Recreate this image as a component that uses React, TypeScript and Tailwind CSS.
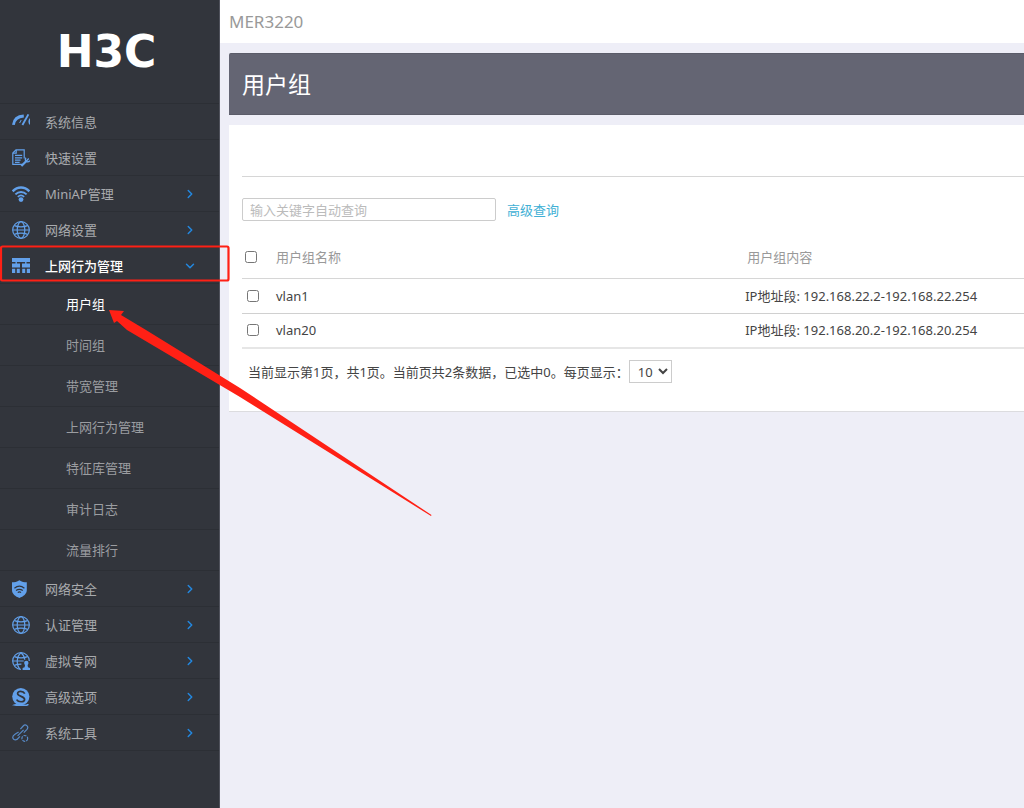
import { ChevronDown, ChevronRight } from "lucide-react";
import type { ReactNode } from "react";

const Icon = ({ children }: { children: ReactNode }) => (
  <svg
    viewBox="0 0 18 18"
    className="size-[18px] shrink-0 text-[#62a0ea]"
    fill="none"
    stroke="currentColor"
    strokeWidth="1.2"
    aria-hidden="true"
  >
    {children}
  </svg>
);

const GaugeIcon = () => (
  <Icon>
    <path d="M1.4 11.800C2 6.800 5.400 3.400 11.800 3" strokeWidth="2.800" />
    <path d="M16.400 1.400 10.400 12" strokeWidth="1.900" />
    <path d="M7.600 10 9.200 7" strokeWidth="1" />
    <path d="M18.200 5.800c-1.200 1.800-1.200 3.800 0 5.600" strokeWidth="1.700" />
  </Icon>
);

const SetupIcon = () => (
  <Icon>
    <path d="M10.600 15.400H.8V4L4 .8h8.200v8.600" />
    <path d="M4.200 1v3.200H1" />
    <path d="M3 6.400h7.200M3 8.800h7.200M3 11.200h5.600M3 13.400h4.600" />
    <path d="m9.400 17 5-5" strokeWidth="2.200" />
    <path d="M14 8.800c-1.200 1.400-.6 3.800 1.200 4 1 .2 2-.2 2.600-1.200M14.600 11.800l2.200-2.200" strokeWidth="1.400" />
  </Icon>
);

const WifiIcon = () => (
  <Icon>
    <path d="M.6 6.400C5.400 1.200 12.600 1.200 17.400 6.400" strokeWidth="2.500" />
    <path d="M3.400 9.400c3.200-3.200 8-3.200 11.200 0" strokeWidth="2" />
    <path d="M5.800 11.800c2-1.800 4.400-1.800 6.400 0" strokeWidth="1.600" />
    <circle cx="9" cy="14.600" r="2.400" fill="currentColor" stroke="none" />
  </Icon>
);

const GlobeIcon = () => (
  <Icon>
    <circle cx="9" cy="9" r="8.300" />
    <ellipse cx="9" cy="9" rx="3.800" ry="8.300" />
    <path d="M.7 9h16.600M2.400 4.600c3.600 1.600 9.600 1.600 13.200 0M2.400 13.400c3.600-1.600 9.600-1.600 13.200 0" />
  </Icon>
);

const BehaviorIcon = () => (
  <Icon>
    <g fill="currentColor" stroke="none">
      <path d="M0 1h18v4H0z" />
      <path d="M3.500 5h1.400v2H3.500zM13.100 5h1.400v2h-1.400z" />
      <path d="M0 6.600h8v3.800H0zM10 6.600h8v3.800h-8z" />
      <path d="M0 11.800h3.200V16H0zM4.800 11.800h3V16h-3zM10.200 11.800h3V16h-3zM14.800 11.800H18V16h-3.200z" />
    </g>
  </Icon>
);

const ShieldIcon = () => (
  <Icon>
    <path d="M7.400.2C5 2 2.600 2.200 0 2.200V10c0 4 3.400 6.400 7.400 8 4-1.600 7.400-4 7.400-8V2.200c-2.600 0-5 -.2-7.400-2z" fill="currentColor" stroke="none" />
    <g stroke="#32353c">
      <path d="M2.400 8.200c3-2.400 7-2.400 10 0M4 10.600c2.200-1.600 4.600-1.600 6.800 0" />
      <path d="M5.800 12.600c1-.8 2.200-.8 3.200 0" />
    </g>
  </Icon>
);

const VpnIcon = () => (
  <Icon>
    <path d="M9 17.300A8.300 8.300 0 1 1 17.300 9" />
    <path d="M7.800 17C4.200 13 4.200 4.600 9 .8c2.400 2 3.600 4.400 3.800 7" />
    <path d="M.7 9h11M2.400 4.600c3.600 1.600 9.600 1.600 13.200 0M2.400 13.400c2-1 4.600-1.200 7-1.200" />
    <g fill="currentColor" stroke="none">
      <circle cx="14.300" cy="10.900" r="2.200" />
      <path d="M13.200 12h2.200l.6 3.200 2 .8v2H10.600v-2l2-.8z" />
    </g>
  </Icon>
);

const AdvancedIcon = () => (
  <Icon>
    <circle cx="8.800" cy="8.600" r="8.600" fill="currentColor" stroke="none" />
    <path d="M2 17c4-1.600 8 2 14.400-.4-3.600 2.600-8.800 1.400-14.400.4z" fill="currentColor" />
    <path d="M12.800 5.600C11.200 2.600 5.600 2.600 5.600 5.600c0 3 7 2.600 7 5.800 0 3-6.200 3.200-8 .2" stroke="#32353c" strokeWidth="1.700" />
  </Icon>
);

const ToolsIcon = () => (
  <Icon>
    <g opacity="0.8">
      <path d="M8.400 5.200 11.200 2c2.400-2.600 6 .6 3.800 3.400l-3.200 3.200M6.600 8 3 10.200c-4.200 2.600-1.600 7 2 5.200l3-3M5.600 11.800l6-6" />
      <circle cx="12.800" cy="14.400" r="2.900" strokeDasharray="3 1" />
    </g>
  </Icon>
);

type MenuItem = {
  label: string;
  icon: () => ReactNode;
  expandable?: boolean;
  children?: string[];
};

const menu: MenuItem[] = [
  { label: "系统信息", icon: GaugeIcon },
  { label: "快速设置", icon: SetupIcon },
  { label: "MiniAP管理", icon: WifiIcon, expandable: true },
  { label: "网络设置", icon: GlobeIcon, expandable: true },
  {
    label: "上网行为管理",
    icon: BehaviorIcon,
    expandable: true,
    children: [
      "用户组",
      "时间组",
      "带宽管理",
      "上网行为管理",
      "特征库管理",
      "审计日志",
      "流量排行",
    ],
  },
  { label: "网络安全", icon: ShieldIcon, expandable: true },
  { label: "认证管理", icon: GlobeIcon, expandable: true },
  { label: "虚拟专网", icon: VpnIcon, expandable: true },
  { label: "高级选项", icon: AdvancedIcon, expandable: true },
  { label: "系统工具", icon: ToolsIcon, expandable: true },
];

const groups = [
  { name: "vlan1", content: "IP地址段: 192.168.22.2-192.168.22.254" },
  { name: "vlan20", content: "IP地址段: 192.168.20.2-192.168.20.254" },
];

const Sidebar = () => (
  <aside className="w-[220px] shrink-0 border-r border-[#50525c] bg-[#32353c] text-[#a9abae]">
    <div className="flex h-[104px] items-center justify-center border-b border-[#2c2f35] pr-1.5">
      <span className="font-['DejaVu_Sans'] text-[44px] leading-none font-bold text-white">
        H3C
      </span>
    </div>
    <nav>
      <ul>
        {menu.map(({ label, icon: ItemIcon, expandable, children }) => (
          <li key={label}>
            <a
              href="#"
              className={`flex h-9 items-center gap-[15px] border-b border-[#2c2f35] pr-[22px] pl-3 ${children ? "font-medium text-white" : ""}`}
            >
              <ItemIcon />
              <span className="flex-1">{label}</span>
              {expandable &&
                (children ? (
                  <ChevronDown size={14} strokeWidth={2.5} className="text-[#2388e0]" />
                ) : (
                  <ChevronRight size={14} strokeWidth={2.5} className="text-[#2388e0]" />
                ))}
            </a>
            {children && (
              <ul>
                {children.map((child, i) => (
                  <li key={child}>
                    <a
                      href="#"
                      className={`flex h-[41px] items-center border-b border-[#2c2f35] pl-[66px] ${i === 0 ? "text-white" : "text-[#9b9da1]"}`}
                    >
                      {child}
                    </a>
                  </li>
                ))}
              </ul>
            )}
          </li>
        ))}
      </ul>
    </nav>
  </aside>
);

const GroupTable = () => (
  <table className="mt-4 w-full table-fixed text-left">
    <thead>
      <tr className="h-[41px] border-b border-[#d6d6d6] text-[#999]">
        <th className="w-[34px] pl-[3px]">
          <input type="checkbox" aria-label="全选" className="block size-3" />
        </th>
        <th className="w-[60%] font-normal">用户组名称</th>
        <th className="pl-0.5 font-normal">用户组内容</th>
      </tr>
    </thead>
    <tbody>
      {groups.map(({ name, content }) => (
        <tr
          key={name}
          className="h-[35px] border-b border-[#d0d0d0] last:border-b-2 last:border-[#e6e6e6]"
        >
          <td className="pl-[5px]">
            <input type="checkbox" aria-label={name} className="block size-3" />
          </td>
          <td>{name}</td>
          <td>{content}</td>
        </tr>
      ))}
    </tbody>
  </table>
);

// Red frame round the open menu entry and the arrow that points at 用户组
const Annotation = () => (
  <svg
    width="440"
    height="520"
    className="pointer-events-none absolute top-0 left-0"
    aria-hidden="true"
  >
    <rect x="1" y="246.500" width="227.500" height="34" rx="1.500" fill="none" stroke="#ff2015" strokeWidth="2.200" />
    <path d="M109 310 124 311 121 315 146 330 240 388 431.500 515 431 516 240 397 127 330 117 321 114 323Z" fill="#ff2015" />
  </svg>
);

export default function App() {
  return (
    <div className="relative flex min-h-screen bg-[#eeeef7] font-['Noto_Sans','Noto_Sans_CJK_SC',sans-serif] text-[13px] leading-5 text-[#444]">
      <Sidebar />
      <div className="min-w-0 flex-1">
        <header className="flex h-[43px] items-center bg-white pl-[9px] text-[17px] text-[#999]">
          MER3220
        </header>
        <main className="pt-[10px] pl-[9px]">
          <h1 className="flex h-[62px] items-center rounded-tl-xs border-y border-[#5b5c69] bg-[#646573] pl-[13px] text-[23px] text-white">
            用户组
          </h1>
          <section className="mt-[10px] border-b border-[#dcdcdf] bg-white pb-7 pl-[13px]">
            <div className="h-[52px] border-b border-[#d6d6d6]" />
            <div className="mt-[21px] flex items-center gap-[11px]">
              <input
                type="text"
                aria-label="关键字"
                placeholder="输入关键字自动查询"
                className="h-[23px] w-[254px] rounded-xs border border-[#ccc] px-[7px] placeholder:text-[#bbb]"
              />
              <a href="#" className="text-[#41b0d5]">
                高级查询
              </a>
            </div>
            <GroupTable />
            <div className="mt-[11px] flex items-center pl-1.5">
              <label htmlFor="page-size">
                当前显示第1页，共1页。当前页共2条数据，已选中0。每页显示：
              </label>
              <select
                id="page-size"
                defaultValue="10"
                className="h-[23px] w-[43px] border border-[#ccc] bg-white pl-1"
              >
                <option>10</option>
                <option>20</option>
                <option>50</option>
              </select>
            </div>
          </section>
        </main>
      </div>
      <Annotation />
    </div>
  );
}
